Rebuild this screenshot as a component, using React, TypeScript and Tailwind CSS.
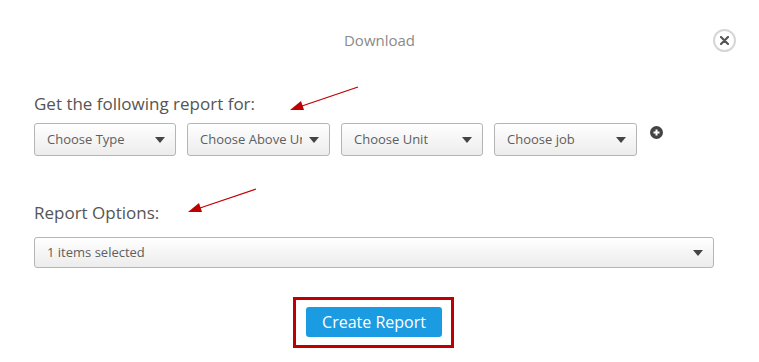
import React from 'react';

// Simple select-looking box with a caret
const FakeSelect: React.FC<{ label: string; className?: string }> = ({ label, className = '' }) => (
    <div
        className={`flex items-center justify-between rounded-[3px] border border-[#b5b5b5] bg-gradient-to-b from-white to-[#ececec] pl-[12px] pr-[10px] text-[13px] text-[#5e5e5e] ${className}`}
    >
        <span className="overflow-hidden whitespace-nowrap">{label}</span>
        <svg width="10" height="6" viewBox="0 0 10 6" className="shrink-0 ml-[7px]">
            <path d="M0 0 L10 0 L5 6 Z" fill="#444" />
        </svg>
    </div>
);

// Red annotation arrow
const Arrow: React.FC<{ className: string }> = ({ className }) => (
    <svg width="72" height="28" viewBox="0 0 72 28" className={`absolute pointer-events-none ${className}`}>
        <line x1="69" y1="2" x2="10" y2="22" stroke="#c00000" strokeWidth="1.3" />
        <path d="M1 25 L12 16 L15 25 Z" fill="#c00000" />
    </svg>
);

export default function App() {
    return (
        <div className="relative w-[759px] h-[362px] bg-white font-['Open_Sans',sans-serif] overflow-hidden">
            {/* header */}
            <div className="relative flex h-[80px] items-center justify-center">
                <span className="text-[15px] text-[#8a8a8a]">Download</span>
                <button className="absolute right-[23px] top-[29px] flex h-[23px] w-[23px] items-center justify-center rounded-full border-2 border-[#d6d6d6] bg-white">
                    <svg width="9" height="9" viewBox="0 0 9 9">
                        <path d="M1 1 L8 8 M8 1 L1 8" stroke="#555" strokeWidth="2.2" strokeLinecap="round" />
                    </svg>
                </button>
            </div>

            <div className="px-[34px]">
                <div className="mt-[13px] text-[17px] leading-[22px] text-[#555]">Get the following report for:</div>
                <div className="mt-[8px] flex items-start">
                    <FakeSelect label="Choose Type" className="h-[33px] w-[142px]" />
                    <FakeSelect label="Choose Above Unit" className="ml-[11px] h-[33px] w-[143px]" />
                    <FakeSelect label="Choose Unit" className="ml-[11px] h-[33px] w-[142px]" />
                    <FakeSelect label="Choose job" className="ml-[11px] h-[33px] w-[143px]" />
                    <svg width="13" height="13" viewBox="0 0 13 13" className="ml-[13px] mt-[3px]">
                        <circle cx="6.5" cy="6.5" r="6.5" fill="#444" />
                        <path d="M6.5 3.5 V9.5 M3.5 6.5 H9.5" stroke="#fff" strokeWidth="2" />
                    </svg>
                </div>

                <div className="mt-[46px] text-[17px] leading-[22px] text-[#555]">Report Options:</div>
                <FakeSelect label="1 items selected" className="mt-[13px] h-[31px] w-[680px]" />
            </div>

            <div className="ml-[293px] mt-[29px] w-[161px] border-[3px] border-[#c00000] pl-[10px] pr-[8px] pt-[7px] pb-[8px]">
                <button className="h-[30px] w-[136px] rounded-[3px] bg-[#1b9be2] text-[16px] text-white">Create Report</button>
            </div>

            <Arrow className="left-[289px] top-[85px]" />
            <Arrow className="left-[187px] top-[187px]" />
        </div>
    );
}
